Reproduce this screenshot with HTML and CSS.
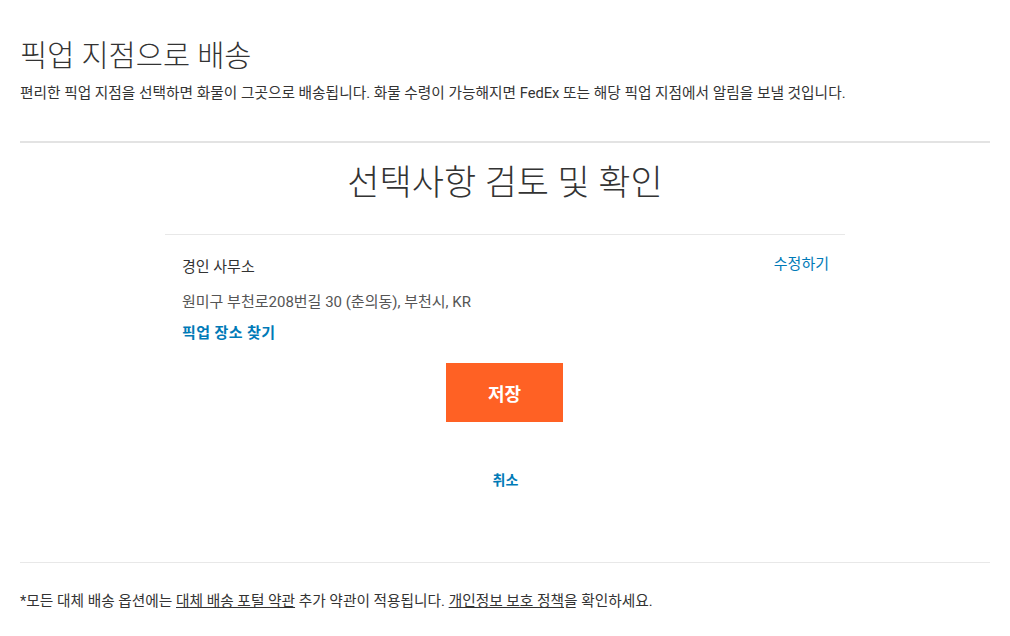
FILE: index.html
```html
<!DOCTYPE html>
<html lang="ko">
  <head>
    <meta charset="UTF-8" />
    <meta name="viewport" content="width=device-width, initial-scale=1.0" />
    <title>픽업 지점으로 배송</title>
    <link rel="stylesheet" href="styles.css">
  </head>
  <body>
    <div class="page">
      <div class="pageHeader">
        <h1 class="pageTitle">픽업 지점으로 배송</h1>
        <p class="pageIntro">편리한 픽업 지점을 선택하면 화물이 그곳으로 배송됩니다. 화물 수령이 가능해지면 FedEx 또는 해당 픽업 지점에서 알림을 보낼 것입니다.</p>
      </div>

      <div class="reviewSection">
        <h2 class="reviewTitle">선택사항 검토 및 확인</h2>

        <div class="locationCard">
          <div class="locationTop">
            <span class="locationName">경인 사무소</span>
            <a class="editLink" href="#">수정하기</a>
          </div>
          <div class="locationAddress">원미구 부천로208번길 30 (춘의동), 부천시, KR</div>
          <a class="findLink" href="#">픽업 장소 찾기</a>

          <div class="buttonContainer">
            <button class="saveButton">저장</button>
          </div>
          <div class="cancelContainer">
            <a class="cancelLink" href="#">취소</a>
          </div>
        </div>
      </div>

      <div class="pageFooter">
        <p>*모든 대체 배송 옵션에는 <a href="#">대체 배송 포털 약관</a> 추가 약관이 적용됩니다. <a href="#">개인정보 보호 정책</a>을 확인하세요.</p>
      </div>
    </div>
  </body>
</html>
```

FILE: styles.css
```css
body {
  margin: 0;
  padding: 0;
  background-color: #fff;
  color: #333;
  font-family: Roboto, 'Noto Sans CJK KR', sans-serif;
}

a {
  text-decoration: none;
}

.page {
  padding: 0 20px;
}

.pageHeader {
  padding-top: 37px;
  padding-bottom: 38px;
  border-bottom: 2px solid #e3e3e3;
}

.pageTitle {
  margin: 0;
  font-size: 29.5px;
  font-weight: 300;
  line-height: 38px;
  color: #333;
}

.pageIntro {
  margin: 8px 0 0;
  font-size: 14.7px;
  line-height: 20px;
  color: #333;
}

.reviewSection {
  padding-bottom: 72px;
  border-bottom: 1px solid #e8e8e8;
}

.reviewTitle {
  margin: 16px 0 0;
  font-size: 35px;
  font-weight: 300;
  line-height: 50px;
  text-align: center;
  color: #333;
}

.locationCard {
  width: 680px;
  margin: 25px auto 0;
  border-top: 1px solid #e8e8e8;
  padding: 20px 16px 0 17px;
  box-sizing: border-box;
}

.locationTop {
  display: flex;
  justify-content: space-between;
  align-items: flex-start;
}

.locationName {
  font-size: 15px;
  line-height: 24px;
  color: #333;
}

.editLink {
  font-size: 15px;
  line-height: 18px;
  color: #007ab7;
}

.locationAddress {
  margin-top: 11px;
  font-size: 15px;
  line-height: 24px;
  color: #555;
}

.findLink {
  display: inline-block;
  margin-top: 9px;
  font-size: 15px;
  font-weight: 700;
  letter-spacing: 0.4px;
  line-height: 20px;
  color: #007ab7;
}

.buttonContainer {
  display: flex;
  justify-content: center;
  margin-top: 20px;
  margin-left: -2px;
}

.saveButton {
  width: 117px;
  height: 59px;
  border: none;
  border-radius: 0;
  background-color: #ff6124;
  color: #fff;
  font-family: Roboto, 'Noto Sans CJK KR', sans-serif;
  font-size: 18px;
  font-weight: 700;
  cursor: pointer;
}

.cancelContainer {
  display: flex;
  justify-content: center;
  margin-top: 48px;
}

.cancelLink {
  font-size: 14px;
  font-weight: 700;
  line-height: 20px;
  color: #007ab7;
}

.pageFooter p {
  margin: 28px 0 0;
  font-size: 14.7px;
  line-height: 20px;
  color: #333;
}

.pageFooter a {
  color: #333;
  text-decoration: underline;
}
```
